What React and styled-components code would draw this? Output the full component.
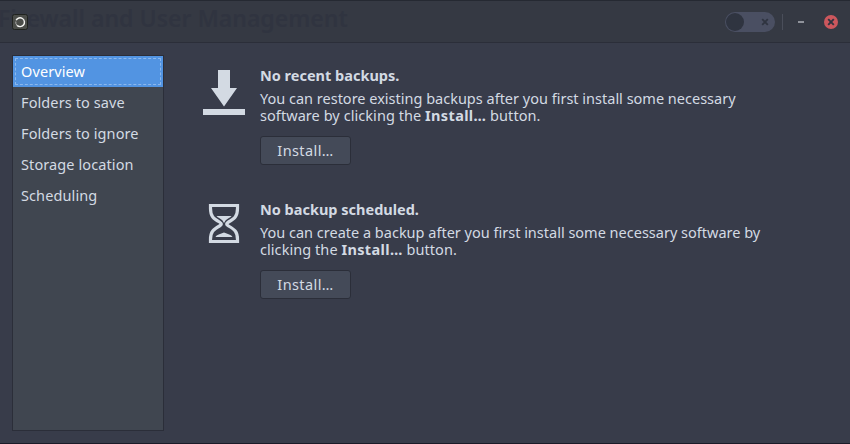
import React from "react";
import styled, { createGlobalStyle } from "styled-components";

const GlobalStyle = createGlobalStyle`
  * { box-sizing: border-box; }
  body { margin: 0; background: #383c4a; overflow: hidden; }
`;

const Window = styled.div`
  display: flex;
  flex-direction: column;
  width: 850px;
  height: 444px;
  background: #383c4a;
  border-bottom: 1px solid #1b1b28;
  color: #d3dae3;
  font: 14.5px/17px "Noto Sans", "Open Sans", sans-serif;
`;

const TitleBar = styled.header`
  position: relative;
  display: flex;
  align-items: center;
  height: 43px;
  padding: 1px 12px 0 12px;
  background: #353943;
  border-top: 1px solid #252932;
  border-bottom: 1px solid #2b2e39;
`;

const Ghost = styled.span`
  position: absolute;
  left: -2px;
  top: 2px;
  color: #303440;
  font-size: 23px;
  line-height: 30px;
  font-weight: 600;
  white-space: nowrap;
`;

const AppIcon = styled.svg`
  position: relative;
  width: 16px;
  height: 16px;
`;

const Controls = styled.div`
  display: flex;
  align-items: center;
  margin-left: auto;
`;

const Toggle = styled.button`
  display: flex;
  align-items: center;
  justify-content: space-between;
  width: 50px;
  height: 20px;
  padding: 0 6px 0 1px;
  border: 0;
  border-radius: 10px;
  background: #4a4f62;
`;

const Knob = styled.span`
  width: 18px;
  height: 18px;
  border-radius: 50%;
  background: #2f3440;
`;

const Separator = styled.span`
  width: 1px;
  height: 16px;
  margin: 0 15px 0 7px;
  background: #4a4e5a;
`;

const Minimise = styled.button`
  width: 6px;
  height: 2px;
  margin-right: 20px;
  padding: 0;
  border: 0;
  background: #90939b;
`;

const Close = styled.button`
  display: flex;
  align-items: center;
  justify-content: center;
  width: 14px;
  height: 14px;
  padding: 0;
  border: 0;
  border-radius: 50%;
  background: #cc575d;
`;

const Body = styled.div`
  display: flex;
  flex: 1;
  padding: 12px;
`;

const Sidebar = styled.nav`
  width: 152px;
  height: 376px;
  border: 1px solid #2b2e39;
  background: #404650;
`;

const NavItem = styled.div`
  display: flex;
  height: 31px;
  padding: 2px;
  background: ${(p) => (p.$active ? "#5294e2" : "transparent")};
  color: ${(p) => (p.$active ? "#ffffff" : "#d3dae3")};
`;

const NavLabel = styled.span`
  flex: 1;
  padding: 4px 5px;
  border: 1px dashed ${(p) => (p.$active ? "#8cb8ed" : "transparent")};
  border-radius: 1px;
  letter-spacing: 0.1px;
  white-space: nowrap;
`;

const Content = styled.main`
  display: flex;
  flex-direction: column;
  gap: 36px;
  padding: 12px 0 0 38px;
`;

const Section = styled.section`
  display: grid;
  grid-template-columns: 58px auto;
  height: 98px;
`;

const SectionIcon = styled.svg`
  width: 44px;
  height: 50px;
`;

const Details = styled.div`
  display: flex;
  flex-direction: column;
  align-items: flex-start;
`;

const Heading = styled.h2`
  height: 17px;
  margin: 0 0 6px;
  font-size: 14.5px;
  font-weight: 700;
  white-space: nowrap;
`;

const Message = styled.p`
  margin: 0;
  white-space: pre-line;
`;

const SecondLine = styled.span`
  letter-spacing: 0.06px;
`;

const Strong = styled.b`
  font-weight: 700;
  letter-spacing: 0.35px;
`;

const InstallButton = styled.button`
  width: 91px;
  height: 29px;
  margin-top: 12px;
  padding: 0 0 1px;
  border: 1px solid #2b2e39;
  border-radius: 3px;
  background: #444a58;
  color: #d3dae3;
  font: inherit;
  letter-spacing: 0.4px;
`;

const pages = [
  { label: "Overview", active: true },
  { label: "Folders to save" },
  { label: "Folders to ignore" },
  { label: "Storage location" },
  { label: "Scheduling" },
];

function Cross({ color, size }) {
  return (
    <svg width={size} height={size} viewBox="0 0 8 8">
      <path d="M1.2 1.2 6.8 6.8M6.8 1.2 1.2 6.8" stroke={color} strokeWidth="1.9" />
    </svg>
  );
}

function DownloadIcon() {
  return (
    <SectionIcon viewBox="0 0 44 50" fill="#d3dae3">
      <path d="M16 3h12v18h7L22 39.500 9 21h7zM1 42h42v6H1z" />
    </SectionIcon>
  );
}

function HourglassIcon() {
  return (
    <SectionIcon viewBox="0 0 44 50">
      <path
        d="M8.500 4.500h27v3c0 8-3 10-9 13.500-2.500 1.500-2.500 2.500 0 4 6 3.500 9 5.500 9 13.500v2h-27v-2c0-8 3-10 9-13.500 2.500-1.500 2.500-2.500 0-4-6-3.500-9-5.500-9-13.500z"
        fill="none"
        stroke="#d3dae3"
        strokeWidth="3.200"
      />
      <path
        d="M14.500 15h15c-1 1.800-5 3-6 4.500L22 22l-1.500-2.500c-1-1.500-5-2.700-6-4.500zM13.500 36c1-2.200 5-3 8.500-4.500 3.500 1.500 7.500 2.300 8.500 4.500z"
        fill="#d3dae3"
      />
    </SectionIcon>
  );
}

export default function App() {
  return (
    <>
      <GlobalStyle />
      <Window>
        <TitleBar>
          <Ghost>Firewall and User Management</Ghost>
          <AppIcon viewBox="0 0 16 16">
            <rect x=".5" y=".5" width="15" height="15" rx="2" fill="#4b4d49" stroke="#20231f" />
            <path d="M4.100 6.300a4.400 4.400 0 1 1 .8 5" fill="none" stroke="#f4f4f2" strokeWidth="1.400" />
            <path d="M3.800 7.500a4.400 4.400 0 0 0 1.300 4" fill="none" stroke="#aaa" strokeWidth="1" />
          </AppIcon>
          <Controls>
            <Toggle aria-label="Automatic backups">
              <Knob />
              <Cross color="#2f3440" size={8} />
            </Toggle>
            <Separator />
            <Minimise aria-label="Minimise" />
            <Close aria-label="Close">
              <Cross color="#2f3440" size={8} />
            </Close>
          </Controls>
        </TitleBar>
        <Body>
          <Sidebar>
            {pages.map((page) => (
              <NavItem key={page.label} $active={page.active}>
                <NavLabel $active={page.active}>{page.label}</NavLabel>
              </NavItem>
            ))}
          </Sidebar>
          <Content>
            <Section>
              <DownloadIcon />
              <Details>
                <Heading>No recent backups.</Heading>
                <Message>
                  You can restore existing backups after you first install some necessary{"\n"}
                  <SecondLine>
                    software by clicking the <Strong>Install…</Strong> button.
                  </SecondLine>
                </Message>
                <InstallButton>Install…</InstallButton>
              </Details>
            </Section>
            <Section>
              <HourglassIcon />
              <Details>
                <Heading>No backup scheduled.</Heading>
                <Message>
                  You can create a backup after you first install some necessary software by{"\n"}
                  <SecondLine>
                    clicking the <Strong>Install…</Strong> button.
                  </SecondLine>
                </Message>
                <InstallButton>Install…</InstallButton>
              </Details>
            </Section>
          </Content>
        </Body>
      </Window>
    </>
  );
}
